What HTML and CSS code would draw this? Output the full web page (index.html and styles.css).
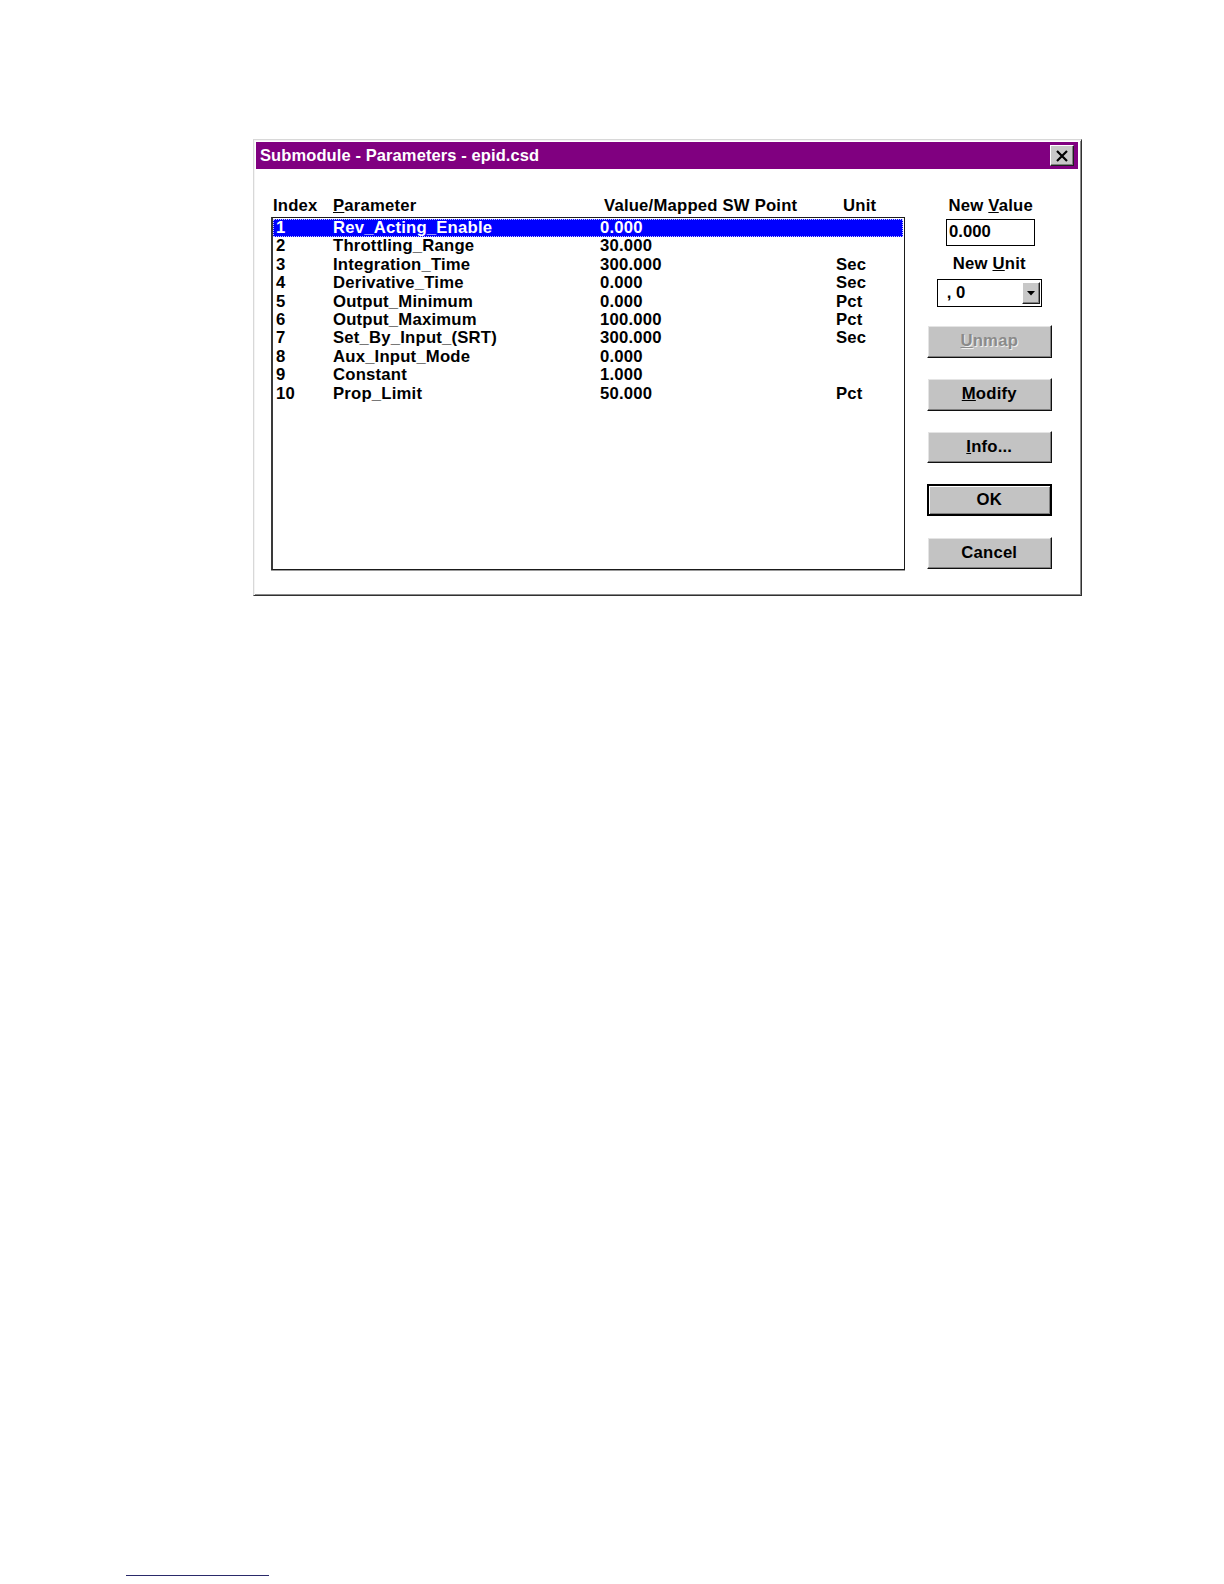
FILE: index.html
```html
<!DOCTYPE html>
<html>
<head>
<meta charset="utf-8">
<title>Submodule - Parameters - epid.csd</title>
<link rel="stylesheet" href="styles.css">
</head>
<body>
<div class="page">
  <div class="dialog">
    <div class="titlebar">
      <span class="title">Submodule - Parameters - epid.csd</span>
      <span class="close-btn">
        <svg width="14" height="12" viewBox="0 0 14 12"><path d="M2 1 L12 11 M12 1 L2 11" stroke="#000" stroke-width="2.2" fill="none"/></svg>
      </span>
    </div>
    <div class="body">
      <div class="left">
        <div class="header cols-h">
          <span>Index</span>
          <span><u>P</u>arameter</span>
          <span>Value/Mapped SW Point</span>
          <span>Unit</span>
        </div>
        <div class="listbox">
          <div class="row cols-r selected"><span>1</span><span>Rev_Acting_Enable</span><span>0.000</span><span></span></div>
          <div class="row cols-r"><span>2</span><span>Throttling_Range</span><span>30.000</span><span></span></div>
          <div class="row cols-r"><span>3</span><span>Integration_Time</span><span>300.000</span><span>Sec</span></div>
          <div class="row cols-r"><span>4</span><span>Derivative_Time</span><span>0.000</span><span>Sec</span></div>
          <div class="row cols-r"><span>5</span><span>Output_Minimum</span><span>0.000</span><span>Pct</span></div>
          <div class="row cols-r"><span>6</span><span>Output_Maximum</span><span>100.000</span><span>Pct</span></div>
          <div class="row cols-r"><span>7</span><span>Set_By_Input_(SRT)</span><span>300.000</span><span>Sec</span></div>
          <div class="row cols-r"><span>8</span><span>Aux_Input_Mode</span><span>0.000</span><span></span></div>
          <div class="row cols-r"><span>9</span><span>Constant</span><span>1.000</span><span></span></div>
          <div class="row cols-r"><span>10</span><span>Prop_Limit</span><span>50.000</span><span>Pct</span></div>
        </div>
      </div>
      <div class="right">
        <div class="label">New <u>V</u>alue</div>
        <div class="textbox">0.000</div>
        <div class="label label-unit">New <u>U</u>nit</div>
        <div class="combo">
          <span class="combo-text">, 0</span>
          <span class="combo-btn">
            <svg width="8" height="5" viewBox="0 0 8 5"><path d="M0 0 H8 L4 4.5 Z" fill="#000"/></svg>
          </span>
        </div>
        <div class="btn btn-first disabled"><span><u>U</u>nmap</span></div>
        <div class="btn"><span><u>M</u>odify</span></div>
        <div class="btn"><span><u>I</u>nfo...</span></div>
        <div class="btn default"><span>OK</span></div>
        <div class="btn"><span>Cancel</span></div>
      </div>
    </div>
  </div>
  <div class="footnote-rule"></div>
</div>
</body>
</html>
```

FILE: styles.css
```css
html, body {
  margin: 0;
  padding: 0;
  background: #ffffff;
  overflow: hidden;
}

body {
  width: 1224px;
  height: 1584px;
  position: relative;
  font-family: "Liberation Sans", Arial, sans-serif;
  font-weight: bold;
  color: #000;
}

.page {
  box-sizing: border-box;
  width: 1224px;
  padding-top: 139px;
  padding-left: 253px;
}

.dialog {
  box-sizing: border-box;
  width: 829px;
  height: 457px;
  background: #ffffff;
  border-style: solid;
  border-width: 1px;
  border-color: #d8d8d8 #303030 #303030 #d8d8d8;
  box-shadow: inset 1px 1px 0 #f4f4f4, inset -1px -1px 0 #8a8a8a;
  padding: 2px 3px 3px 2px;
  display: flex;
  flex-direction: column;
}

.titlebar {
  height: 27px;
  background: #800080;
  display: flex;
  align-items: center;
  justify-content: space-between;
  padding: 0 4px 0 4px;
}

.title {
  color: #ffffff;
  font-size: 16.5px;
  letter-spacing: 0.1px;
}

.close-btn {
  box-sizing: border-box;
  width: 24px;
  height: 21px;
  background: #c8c8c8;
  border-style: solid;
  border-width: 1px;
  border-color: #ffffff #202020 #202020 #ffffff;
  box-shadow: inset -1px -1px 0 #808080;
  display: flex;
  align-items: center;
  justify-content: center;
}

.body {
  display: flex;
  padding: 27px 0 0 15px;
  gap: 22px;
}

.left {
  width: 634px;
}

.header {
  height: 20px;
  line-height: 20px;
  font-size: 16.7px;
  letter-spacing: 0.2px;
  padding-left: 2px;
  margin-bottom: 1px;
}

.cols-h {
  display: grid;
  grid-template-columns: 60px 271px 239px 1fr;
}

.cols-r {
  display: grid;
  grid-template-columns: 57px 267px 236px 1fr;
}

.listbox {
  box-sizing: border-box;
  height: 353px;
  border: 1px solid #1a1a1a;
  border-left: 2px solid #3a3a3a;
  box-shadow: 0 1px 0 #9a9a9a;
  padding: 1px 1px 0 0;
  background: #fff;
}

.row {
  box-sizing: border-box;
  height: 18.42px;
  line-height: 18.4px;
  font-size: 16.7px;
  letter-spacing: 0.2px;
  padding-left: 3px;
  white-space: nowrap;
}

.row.selected {
  background: #0000ff;
  color: #ffffff;
  outline: 1px dotted #c8c8ff;
  outline-offset: -1px;
}

.right {
  width: 124.5px;
  display: flex;
  flex-direction: column;
  align-items: center;
}

.label {
  height: 20px;
  line-height: 20px;
  font-size: 16.7px;
  letter-spacing: 0.2px;
  padding-left: 3px;
}

.label-unit {
  margin-top: 8px;
  padding-left: 0;
}

.textbox {
  box-sizing: border-box;
  width: 89px;
  height: 27.3px;
  margin-top: 3px;
  margin-left: 2.5px;
  border: 1.5px solid #000;
  background: #fff;
  font-size: 16.7px;
  line-height: 24px;
  padding-left: 2px;
}

.combo {
  box-sizing: border-box;
  width: 105px;
  height: 27.6px;
  margin-top: 5px;
  border: 1.5px solid #000;
  background: #fff;
  display: flex;
  align-items: center;
  justify-content: space-between;
  padding: 0 1px 0 9px;
  font-size: 16.7px;
}

.combo-btn {
  box-sizing: border-box;
  width: 18px;
  height: 22px;
  background: #c8c8c8;
  border-style: solid;
  border-width: 1px;
  border-color: #ffffff #202020 #202020 #ffffff;
  box-shadow: inset -1px -1px 0 #808080;
  display: flex;
  align-items: center;
  justify-content: center;
}

.btn {
  box-sizing: border-box;
  width: 124.5px;
  height: 32.4px;
  margin-top: 20.5px;
  background: #c3c3c3;
  border-style: solid;
  border-width: 1px;
  border-color: #ffffff #101010 #101010 #ffffff;
  box-shadow: inset -1px -1px 0 #808080, inset 1px 1px 0 #e4e4e4;
  display: flex;
  align-items: center;
  justify-content: center;
  font-size: 16.7px;
  letter-spacing: 0.2px;
}

.btn-first {
  margin-top: 18.4px;
}

.btn.default {
  border: 2px solid #000;
  box-shadow: inset 1px 1px 0 #ffffff, inset -1px -1px 0 #808080;
}

.btn.disabled {
  color: #8a8a8a;
  text-shadow: 1px 1px 0 #f0f0f0;
}

.footnote-rule {
  position: absolute;
  left: 126px;
  top: 1575px;
  width: 143px;
  height: 1px;
  background: #2a2a6a;
}
```
